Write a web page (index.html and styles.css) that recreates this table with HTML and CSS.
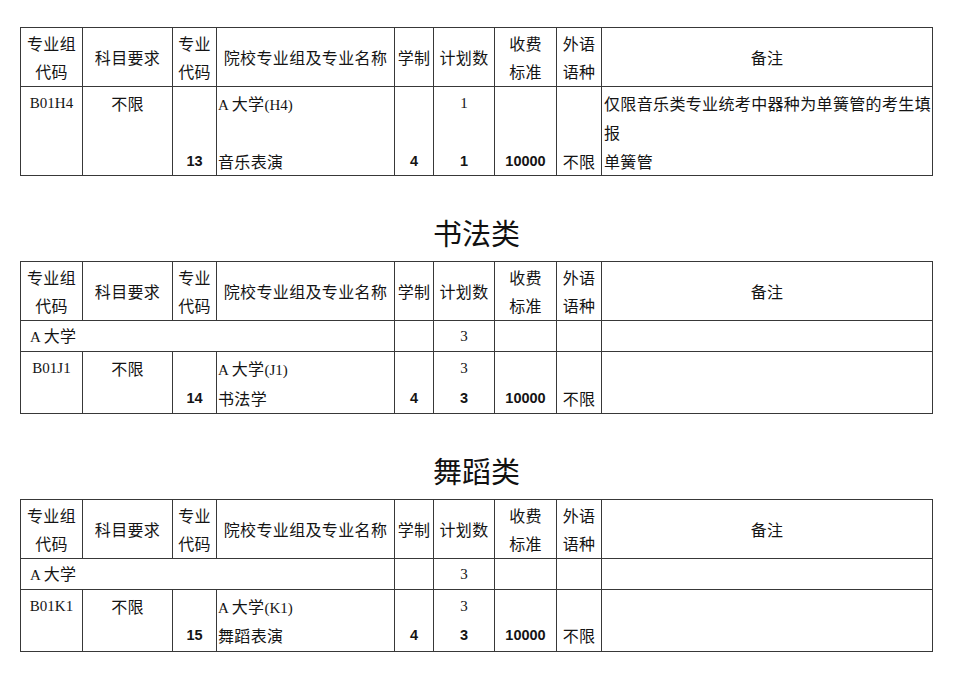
FILE: index.html
```html
<!DOCTYPE html>
<html lang="zh-CN">
<head>
<meta charset="utf-8">
<title>专业计划</title>
<link rel="stylesheet" href="styles.css">
</head>
<body>
<div class="page">

  <table class="plan">
    <colgroup>
      <col class="c1"><col class="c2"><col class="c3"><col class="c4"><col class="c5"><col class="c6"><col class="c7"><col class="c8"><col class="c9">
    </colgroup>
    <tr class="head">
      <td>专业组<br>代码</td>
      <td>科目要求</td>
      <td>专业<br>代码</td>
      <td>院校专业组及专业名称</td>
      <td>学制</td>
      <td>计划数</td>
      <td>收费<br>标准</td>
      <td>外语<br>语种</td>
      <td>备注</td>
    </tr>
    <tr class="data three">
      <td class="serif"><div class="ln">B01H4</div></td>
      <td><div class="ln">不限</div></td>
      <td class="num"><div class="ln"></div><div class="ln"></div><div class="ln">13</div></td>
      <td class="serif left"><div class="ln">A <span class="cjk">大学</span>(H4)</div><div class="ln"></div><div class="ln cjk">音乐表演</div></td>
      <td class="num"><div class="ln"></div><div class="ln"></div><div class="ln">4</div></td>
      <td><div class="ln serif">1</div><div class="ln"></div><div class="ln num">1</div></td>
      <td class="num"><div class="ln"></div><div class="ln"></div><div class="ln">10000</div></td>
      <td><div class="ln"></div><div class="ln"></div><div class="ln">不限</div></td>
      <td class="left note"><div class="ln">仅限音乐类专业统考中器种为单簧管的考生填</div><div class="ln">报</div><div class="ln">单簧管</div></td>
    </tr>
  </table>

  <h2 class="cat">书法类</h2>

  <table class="plan">
    <colgroup>
      <col class="c1"><col class="c2"><col class="c3"><col class="c4"><col class="c5"><col class="c6"><col class="c7"><col class="c8"><col class="c9">
    </colgroup>
    <tr class="head">
      <td>专业组<br>代码</td>
      <td>科目要求</td>
      <td>专业<br>代码</td>
      <td>院校专业组及专业名称</td>
      <td>学制</td>
      <td>计划数</td>
      <td>收费<br>标准</td>
      <td>外语<br>语种</td>
      <td>备注</td>
    </tr>
    <tr class="school">
      <td colspan="4" class="serif left school-name">A <span class="cjk">大学</span></td>
      <td></td>
      <td class="serif">3</td>
      <td></td>
      <td></td>
      <td></td>
    </tr>
    <tr class="data">
      <td class="serif"><div class="ln">B01J1</div></td>
      <td><div class="ln">不限</div></td>
      <td class="num"><div class="ln"></div><div class="ln">14</div></td>
      <td class="serif left"><div class="ln">A <span class="cjk">大学</span>(J1)</div><div class="ln cjk">书法学</div></td>
      <td class="num"><div class="ln"></div><div class="ln">4</div></td>
      <td><div class="ln serif">3</div><div class="ln num">3</div></td>
      <td class="num"><div class="ln"></div><div class="ln">10000</div></td>
      <td><div class="ln"></div><div class="ln">不限</div></td>
      <td class="left note"></td>
    </tr>
  </table>

  <h2 class="cat">舞蹈类</h2>

  <table class="plan">
    <colgroup>
      <col class="c1"><col class="c2"><col class="c3"><col class="c4"><col class="c5"><col class="c6"><col class="c7"><col class="c8"><col class="c9">
    </colgroup>
    <tr class="head">
      <td>专业组<br>代码</td>
      <td>科目要求</td>
      <td>专业<br>代码</td>
      <td>院校专业组及专业名称</td>
      <td>学制</td>
      <td>计划数</td>
      <td>收费<br>标准</td>
      <td>外语<br>语种</td>
      <td>备注</td>
    </tr>
    <tr class="school">
      <td colspan="4" class="serif left school-name">A <span class="cjk">大学</span></td>
      <td></td>
      <td class="serif">3</td>
      <td></td>
      <td></td>
      <td></td>
    </tr>
    <tr class="data">
      <td class="serif"><div class="ln">B01K1</div></td>
      <td><div class="ln">不限</div></td>
      <td class="num"><div class="ln"></div><div class="ln">15</div></td>
      <td class="serif left"><div class="ln">A <span class="cjk">大学</span>(K1)</div><div class="ln cjk">舞蹈表演</div></td>
      <td class="num"><div class="ln"></div><div class="ln">4</div></td>
      <td><div class="ln serif">3</div><div class="ln num">3</div></td>
      <td class="num"><div class="ln"></div><div class="ln">10000</div></td>
      <td><div class="ln"></div><div class="ln">不限</div></td>
      <td class="left note"></td>
    </tr>
  </table>

</div>
</body>
</html>
```

FILE: styles.css
```css
html, body {
  margin: 0;
  padding: 0;
  background: #ffffff;
}

.page {
  padding: 27px 0 0 20px;
  width: 913px;
  font-family: "Noto Sans CJK SC", "Noto Sans", sans-serif;
  color: #141414;
}

.plan {
  border-collapse: collapse;
  table-layout: fixed;
  width: 913px;
  font-size: 16px;
  letter-spacing: 0.35px;
}

.c1 { width: 62px; }
.c2 { width: 90px; }
.c3 { width: 44px; }
.c4 { width: 178px; }
.c5 { width: 39px; }
.c6 { width: 61px; }
.c7 { width: 62px; }
.c8 { width: 45px; }
.c9 { width: 331px; }

.plan td {
  border: 1px solid #383838;
  padding: 0;
  text-align: center;
  vertical-align: middle;
  line-height: 28px;
  white-space: nowrap;
  overflow: hidden;
}

.head td {
  height: 58px;
}

.school td {
  height: 30px;
  line-height: 28px;
}

.data td {
  vertical-align: top;
  padding-top: 2px;
}

.ln {
  height: 29.3px;
  line-height: 29.3px;
}

.three .ln {
  height: 28.8px;
  line-height: 28.8px;
}

.serif {
  font-family: "Liberation Serif", "Noto Sans CJK SC", serif;
  font-size: 15px;
  letter-spacing: 0;
}

.serif .cjk {
  font-family: "Noto Sans CJK SC", sans-serif;
  font-size: 16px;
  letter-spacing: 0.35px;
}

.num,
.plan td.num {
  font-family: "Liberation Sans", Arial, sans-serif;
  font-weight: bold;
  font-size: 14.5px;
  letter-spacing: 0;
}

.plan td.left {
  text-align: left;
  padding-left: 1px;
}

.plan td.note {
  padding-left: 2px;
}

.plan td.school-name {
  padding-left: 9px;
}

.cat {
  width: 913px;
  margin: 0 0 11px 0;
  padding-top: 38px;
  font-size: 29px;
  line-height: 36px;
  font-weight: normal;
  text-align: center;
  letter-spacing: 0;
  color: #111;
}
```
